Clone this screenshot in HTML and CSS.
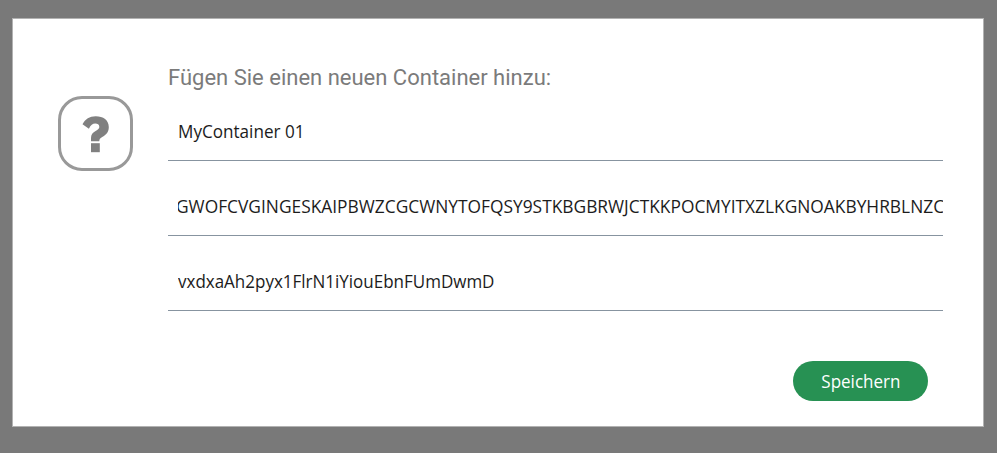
FILE: index.html
```html
<!DOCTYPE html>
<html lang="de">
<head>
<meta charset="utf-8">
<title>Container hinzufügen</title>
<link rel="stylesheet" href="styles.css">
</head>
<body>
<main class="dialog">
  <div class="icon">
    <svg width="27" height="37" viewBox="0 0 27 37" fill="#808080"><path d="M0.500 8.300C3.300 3 7.500 0.300 13.700 0.300C21.300 0.300 26.800 4.300 26.800 11C26.800 16.500 24 18.800 20.200 21C18 22.300 17.300 23.200 17.300 25.200H9V22C9 18.500 10.500 16.800 14 14.700C16.500 13.200 17.300 12.500 17.300 10.700C17.300 8.700 15.500 7.600 13.300 7.600C10.500 7.600 8.800 9.300 6.900 12.700Z"/><path d="M9 27.200H17.800V36.200H9Z"/></svg>
  </div>
  <form class="form">
    <h1 class="title">Fügen Sie einen neuen Container hinzu:</h1>
    <div class="field"><span class="value name">MyContainer 01</span></div>
    <div class="field"><div class="clip"><span class="value address">GWOFCVGINGESKAIPBWZCGCWNYTOFQSY9STKBGBRWJCTKKPOCMYITXZLKGNOAKBYHRBLNZC</span></div></div>
    <div class="field"><span class="value key">vxdxaAh2pyx1FlrN1iYiouEbnFUmDwmD</span></div>
    <button class="save" type="button"><span class="save-label">Speichern</span></button>
  </form>
</main>
</body>
</html>
```

FILE: styles.css
```css
* { box-sizing: border-box; }
body { margin: 0; height: 453px; padding: 18px 13px 26px 12px; background: #797979; font-family: "Open Sans", "Noto Sans", sans-serif; overflow: hidden; }
.dialog { display: flex; height: 409px; background: #fff; border: 1px solid #b2b2b2; padding: 0 40px 0 45px; }
.icon { flex: none; display: flex; align-items: center; justify-content: center; width: 75px; height: 75px; margin: 77px 35px 0 0; padding-top: 2px; border: 3px solid #999; border-radius: 24px; }
.form { display: flex; flex-direction: column; flex: 1; min-width: 0; }
.title { margin: 44px 0 0; height: 30px; font: 400 22px/30px Roboto, sans-serif; color: #7b7b7b; white-space: nowrap; }
.field { height: 75px; padding: 31px 0 0 10px; border-bottom: 1px solid #8794a0; color: #1c1c1c; font-size: 18px; line-height: 28px; white-space: nowrap; }
.field:nth-of-type(1) { height: 49px; padding-top: 5px; margin-top: 19px; }
.clip { overflow: hidden; height: 28px; }
.value { display: inline-block; transform-origin: left; }
.name { transform: scaleX(.95); }
.address { margin-left: -2px; transform: scaleX(.964); }
.key { transform: scaleX(.944); }
.save { align-self: flex-end; width: 135px; height: 40px; margin: 50px 15px 0 0; padding: 0; border: 0; border-radius: 20px; background: #279153; color: #fff; font: 18px/40px "Open Sans", sans-serif; }
.save-label { display: inline-block; transform: scaleX(.944); }
```
